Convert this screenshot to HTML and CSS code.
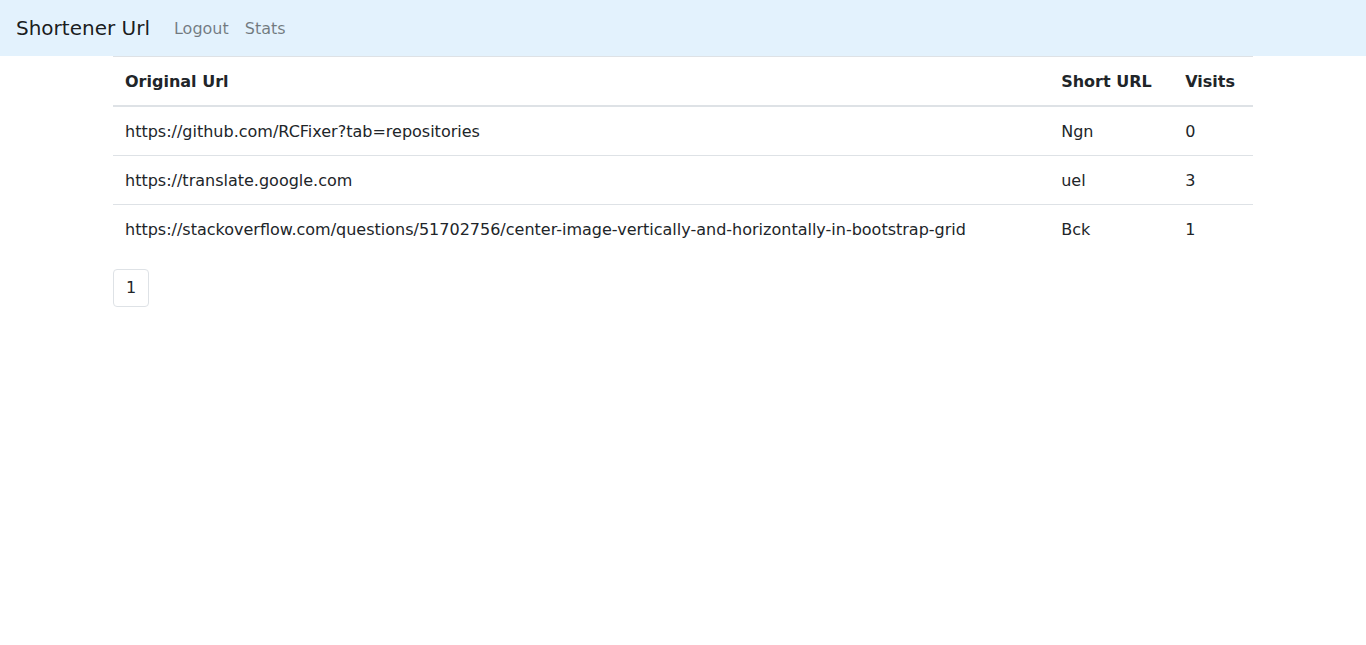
FILE: index.html
```html
<!DOCTYPE html>
<html lang="en">
<head>
<meta charset="utf-8">
<title>Shortener Url</title>
<link rel="stylesheet" href="styles.css">
</head>
<body>
<nav class="navbar">
  <a class="brand" href="#">Shortener Url</a>
  <ul class="nav">
    <li><a class="nav-link" href="#">Logout</a></li>
    <li><a class="nav-link" href="#">Stats</a></li>
  </ul>
</nav>
<main class="container">
  <table class="table">
    <thead>
      <tr><th>Original Url</th><th>Short URL</th><th>Visits</th></tr>
    </thead>
    <tbody>
      <tr><td>https://github.com/RCFixer?tab=repositories</td><td>Ngn</td><td>0</td></tr>
      <tr><td>https://translate.google.com</td><td>uel</td><td>3</td></tr>
      <tr><td>https://stackoverflow.com/questions/51702756/center-image-vertically-and-horizontally-in-bootstrap-grid</td><td>Bck</td><td>1</td></tr>
    </tbody>
  </table>
  <ul class="pagination">
    <li><a class="page-link" href="#">1</a></li>
  </ul>
</main>
</body>
</html>
```
FILE: styles.css
```css
* { box-sizing: border-box; }
html, body { margin: 0; }
body {
  font-family: "DejaVu Sans", sans-serif;
  font-size: 16px;
  line-height: 1.5;
  color: #212529;
  background: #fff;
}
a { text-decoration: none; }
.navbar {
  display: flex;
  align-items: center;
  background: #e3f2fd;
  padding: 8px 16px;
  height: 56px;
}
.brand {
  font-size: 20px;
  line-height: 30px;
  padding: 5px 0;
  margin-right: 16px;
  color: rgba(0,0,0,.9);
}
.nav {
  display: flex;
  list-style: none;
  margin: 0;
  padding: 0;
}
.nav-link {
  display: block;
  padding: 9px 8px 7px;
  color: rgba(0,0,0,.5);
}
.container {
  width: 1140px;
  margin: 0 auto;
}
.table {
  width: 100%;
  border-collapse: collapse;
  margin-bottom: 16px;
}
.table th, .table td {
  padding: 13px 12px 11px;
  text-align: left;
  vertical-align: top;
  border-top: 1px solid #dee2e6;
}
.table th {
  font-weight: bold;
  border-bottom: 2px solid #dee2e6;
  vertical-align: bottom;
}
.table thead + tbody tr:first-child td { border-top: 0; }
.pagination {
  display: flex;
  list-style: none;
  margin: 0;
  padding: 0;
}
.page-link {
  display: block;
  padding: 8px 12px;
  line-height: 1.25;
  border: 1px solid #dee2e6;
  border-radius: 4px;
  color: #212529;
}
```
